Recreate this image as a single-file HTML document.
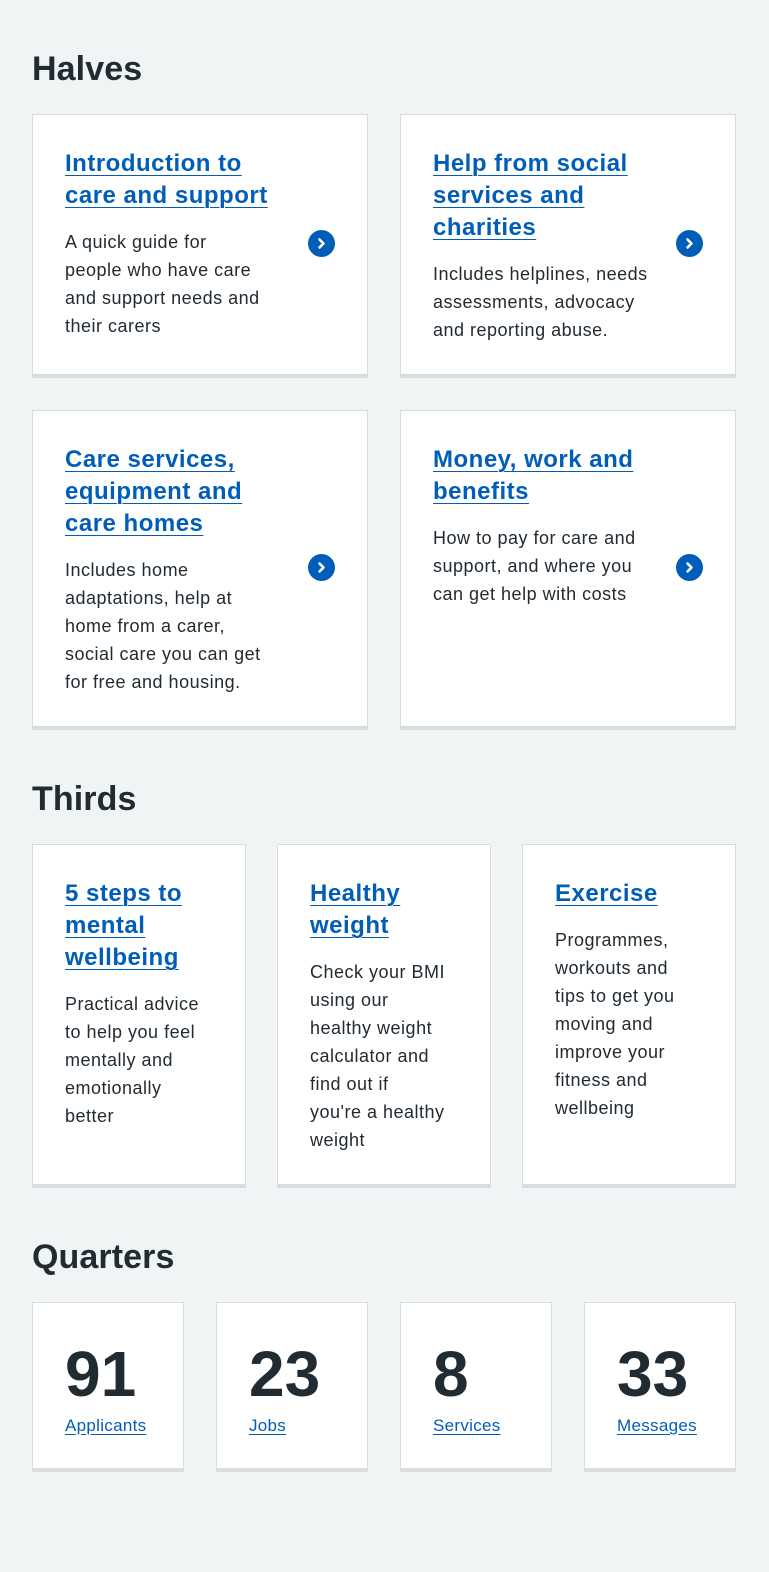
<!DOCTYPE html>
<html><head><meta charset="utf-8">
<style>
*{margin:0;padding:0;box-sizing:border-box}
body{width:769px;height:1572px;background:#f0f4f5;font-family:"Liberation Sans",Arial,sans-serif;color:#212b32;position:relative;overflow:hidden}
h2{position:absolute;left:32px;font-size:34px;font-weight:700;line-height:40px;letter-spacing:0.1px}
.card{position:absolute;background:#fff;border:1px solid #d8dde0;border-bottom:4px solid #d8dde0;padding:33px 32px 31px}
.card a.t{display:block;color:#005eb8;font-size:24px;font-weight:700;line-height:32px;letter-spacing:0.5px;white-space:nowrap;text-decoration:underline;text-decoration-thickness:1px;text-underline-offset:4px}
.card p{font-size:18px;line-height:28px;margin-top:16px;letter-spacing:0.5px;white-space:nowrap}
.half{width:336px}
.ic{position:absolute;right:32px;top:50%;margin-top:-15px;width:27px;height:27px}
.num{font-size:64px;font-weight:700;line-height:72px;margin-top:2px}
.q a{color:#005eb8;font-size:17px;line-height:24px;letter-spacing:0.3px;text-decoration:underline;text-underline-offset:3px;display:block;margin-top:4px}
</style></head><body>
<h2 style="top:49px">Halves</h2>
<div class="card half" style="left:32px;top:114px;height:264px"><div class="in"><a class="t">Introduction to<br>care and support</a><p>A quick guide for<br>people who have care<br>and support needs and<br>their carers</p></div><svg class="ic" viewBox="0 0 27 27"><circle cx="13.5" cy="13.5" r="13.5" fill="#005eb8"/><path d="M11.5 9.5l4 4-4 4" stroke="#fff" stroke-width="2.6" fill="none" stroke-linecap="round" stroke-linejoin="round"/></svg></div>
<div class="card half" style="left:400px;top:114px;height:264px"><div class="in"><a class="t">Help from social<br>services and<br>charities</a><p>Includes helplines, needs<br>assessments, advocacy<br>and reporting abuse.</p></div><svg class="ic" viewBox="0 0 27 27"><circle cx="13.5" cy="13.5" r="13.5" fill="#005eb8"/><path d="M11.5 9.5l4 4-4 4" stroke="#fff" stroke-width="2.6" fill="none" stroke-linecap="round" stroke-linejoin="round"/></svg></div>
<div class="card half" style="left:32px;top:410px;height:320px"><div class="in"><a class="t">Care services,<br>equipment and<br>care homes</a><p>Includes home<br>adaptations, help at<br>home from a carer,<br>social care you can get<br>for free and housing.</p></div><svg class="ic" viewBox="0 0 27 27"><circle cx="13.5" cy="13.5" r="13.5" fill="#005eb8"/><path d="M11.5 9.5l4 4-4 4" stroke="#fff" stroke-width="2.6" fill="none" stroke-linecap="round" stroke-linejoin="round"/></svg></div>
<div class="card half" style="left:400px;top:410px;height:320px"><div class="in"><a class="t">Money, work and<br>benefits</a><p>How to pay for care and<br>support, and where you<br>can get help with costs</p></div><svg class="ic" viewBox="0 0 27 27"><circle cx="13.5" cy="13.5" r="13.5" fill="#005eb8"/><path d="M11.5 9.5l4 4-4 4" stroke="#fff" stroke-width="2.6" fill="none" stroke-linecap="round" stroke-linejoin="round"/></svg></div>

<h2 style="top:779px">Thirds</h2>
<div class="card" style="left:32px;top:844px;width:214px;height:344px"><a class="t">5 steps to<br>mental<br>wellbeing</a><p>Practical advice<br>to help you feel<br>mentally and<br>emotionally<br>better</p></div>
<div class="card" style="left:277px;top:844px;width:214px;height:344px"><a class="t">Healthy<br>weight</a><p>Check your BMI<br>using our<br>healthy weight<br>calculator and<br>find out if<br>you're a healthy<br>weight</p></div>
<div class="card" style="left:522px;top:844px;width:214px;height:344px"><a class="t">Exercise</a><p>Programmes,<br>workouts and<br>tips to get you<br>moving and<br>improve your<br>fitness and<br>wellbeing</p></div>

<h2 style="top:1237px">Quarters</h2>
<div class="card q" style="left:32px;top:1302px;width:152px;height:170px"><div class="num">91</div><a>Applicants</a></div>
<div class="card q" style="left:216px;top:1302px;width:152px;height:170px"><div class="num">23</div><a>Jobs</a></div>
<div class="card q" style="left:400px;top:1302px;width:152px;height:170px"><div class="num">8</div><a>Services</a></div>
<div class="card q" style="left:584px;top:1302px;width:152px;height:170px"><div class="num">33</div><a>Messages</a></div>
</body></html>
